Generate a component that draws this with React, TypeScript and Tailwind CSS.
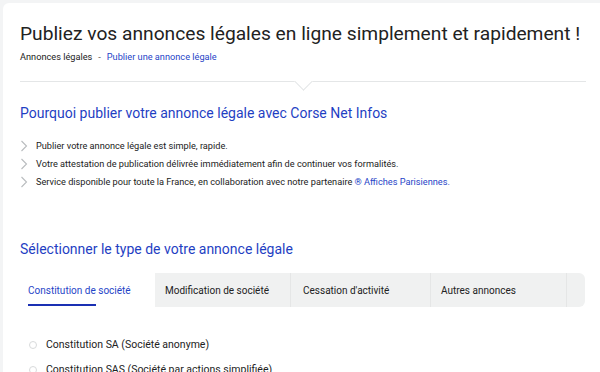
import React from 'react';

const reasons = [
    'Publier votre annonce légale est simple, rapide.',
    'Votre attestation de publication délivrée immédiatement afin de continuer vos formalités.',
];

const tabs = ['Modification de société', "Cessation d'activité", 'Autres annonces'];

const Chevron: React.FC = () => (
    <svg width="8" height="12" viewBox="0 0 8 12" className="shrink-0">
        <polyline points="1.5,1 6.5,6 1.5,11" fill="none" stroke="#b9bcbf" strokeWidth="1.1" />
    </svg>
);

const App: React.FC = () => {
    return (
        <div className="min-h-screen bg-[#f3f4f5] pt-[3px] pl-[3px] font-['Roboto',sans-serif] overflow-hidden">
            <div className="bg-white rounded-tl-md h-[369px] pl-[17px] pr-[14px] pt-[20px] overflow-hidden">
                <h1 className="text-[19.2px] leading-[22px] text-[#222] whitespace-nowrap">
                    Publiez vos annonces légales en ligne simplement et rapidement !
                </h1>
                <div className="mt-[5px] text-[9.2px] leading-[13px] text-[#222]">
                    Annonces légales
                    <span className="mx-[6px] text-[#555]">-</span>
                    <a href="#" className="text-[#1f45c7]">Publier une annonce légale</a>
                </div>

                <div className="relative mt-[18px] border-t border-[#e4e6e7]">
                    <div className="absolute left-1/2 -top-[7px] -translate-x-[6px] w-[13px] h-[13px] rotate-45 bg-white border-r border-b border-[#e4e6e7]" />
                </div>

                <h2 className="mt-[22px] text-[14px] leading-[18px] text-[#1f3fc3]">
                    Pourquoi publier votre annonce légale avec Corse Net Infos
                </h2>
                <ul className="mt-[15px] text-[9.2px] leading-[18px] text-[#222]">
                    {reasons.map((r) => (
                        <li key={r} className="flex items-center gap-[8px]">
                            <Chevron />
                            <span>{r}</span>
                        </li>
                    ))}
                    <li className="flex items-center gap-[8px]">
                        <Chevron />
                        <span>
                            Service disponible pour toute la France, en collaboration avec notre partenaire{' '}
                            <a href="#" className="text-[#1f45c7]">® Affiches Parisiennes.</a>
                        </span>
                    </li>
                </ul>

                <h2 className="mt-[49px] text-[14px] leading-[18px] text-[#1f3fc3]">
                    Sélectionner le type de votre annonce légale
                </h2>

                <div className="mt-[15px] flex h-[34px] w-[565px] bg-[#f0f1f1] rounded-r-md text-[10px]">
                    <div className="relative w-[135px] bg-white flex items-center pl-[8px] text-[#1f45c7]">
                        Constitution de société
                        <div className="absolute left-[8px] bottom-[1px] w-[68px] h-[2.5px] bg-[#1a30b3]" />
                    </div>
                    {tabs.map((t, i) => (
                        <div
                            key={t}
                            className={
                                i === 1
                                    ? 'w-[140px] flex items-center pl-[12px] text-[#222] border-r border-[#e5e6e6]'
                                    : 'w-[136px] flex items-center pl-[10px] text-[#222] border-r border-[#e5e6e6]'
                            }
                        >
                            {t}
                        </div>
                    ))}
                </div>

                <div className="mt-[31px] flex flex-col gap-[12px] pl-[9px] text-[10.5px] leading-[13px] text-[#222]">
                    <label className="flex items-center gap-[9px]">
                        <span className="w-[8px] h-[8px] rounded-full border border-[#d8dadb]" />
                        Constitution SA (Société anonyme)
                    </label>
                    <label className="flex items-center gap-[9px]">
                        <span className="w-[8px] h-[8px] rounded-full border border-[#d8dadb]" />
                        Constitution SAS (Société par actions simplifiée)
                    </label>
                </div>
            </div>
        </div>
    );
};

export default App;
